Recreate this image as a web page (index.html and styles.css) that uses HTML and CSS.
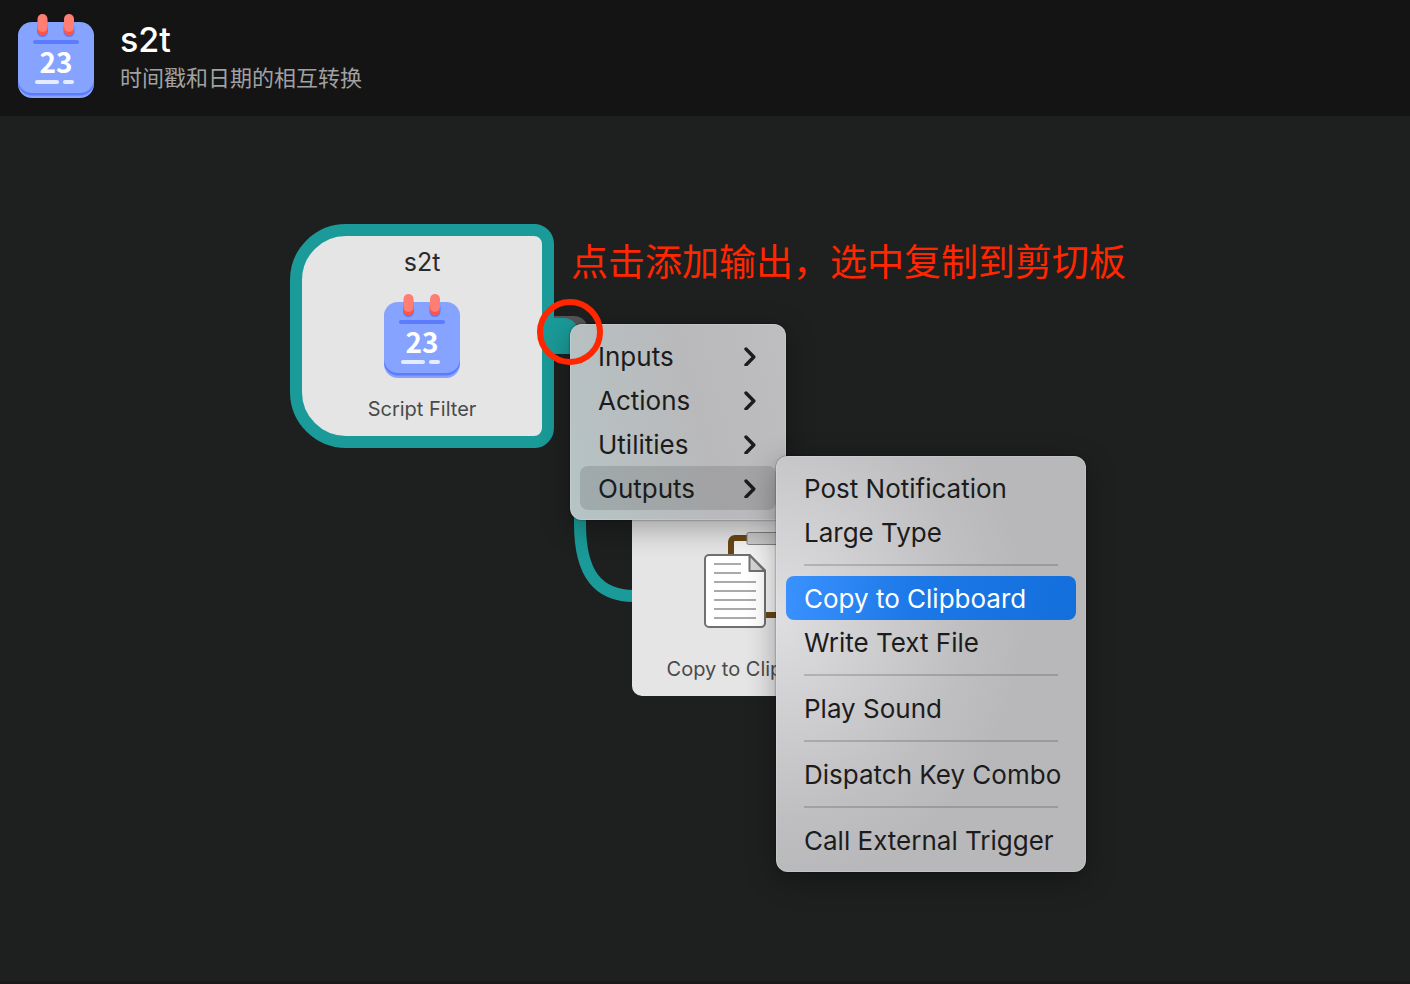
FILE: index.html
```html
<!DOCTYPE html>
<html lang="zh-CN">
<head>
<meta charset="utf-8">
<title>s2t</title>
<link rel="stylesheet" href="styles.css">
</head>
<body>
<svg class="defs" aria-hidden="true">
  <symbol id="calendar" viewBox="0 0 76 84">
    <rect x="0" y="10" width="76" height="74" rx="14" fill="#85a3ff"/>
    <path d="M0 65V68a14 13.500 0 0 0 14 13.500H62A14 13.500 0 0 0 76 68V65Z" fill="#5c7bff"/>
    <rect x="0" y="8" width="76" height="71" rx="14" fill="#85a3ff"/>
    <rect x="19" y="8" width="11" height="15" rx="5.500" fill="#5c7bff"/>
    <rect x="45.500" y="8" width="11" height="15" rx="5.500" fill="#5c7bff"/>
    <rect x="19.500" y="4" width="10" height="17.500" rx="5" fill="#ff5449"/>
    <rect x="46" y="4" width="10" height="17.500" rx="5" fill="#ff5449"/>
    <rect x="19.500" y="0" width="10" height="18" rx="5" fill="#ff7e73"/>
    <rect x="46" y="0" width="10" height="18" rx="5" fill="#ff7e73"/>
    <rect x="15" y="26" width="46" height="4" rx="2" fill="#5c7bff"/>
    <rect x="17" y="66" width="24" height="4" rx="2" fill="#e6ecff"/>
    <rect x="45" y="66" width="11" height="4" rx="2" fill="#e6ecff"/>
  </symbol>
  <symbol id="chevron" viewBox="0 0 12 20">
    <path d="M2 3 9.800 11 2 19" fill="none" stroke="#1c1c1c" stroke-width="3.400" stroke-linecap="round" stroke-linejoin="round"/>
  </symbol>
</svg>

<header class="header">
  <svg class="cal" viewBox="0 0 76 84"><use href="#calendar"/><text x="38" y="59" text-anchor="middle" class="cal-day">23</text></svg>
  <div class="heading">
    <h1 class="title">s2t</h1>
    <p class="subtitle">时间戳和日期的相互转换</p>
  </div>
</header>

<main class="canvas">
  <svg class="wire" viewBox="0 0 80 110" aria-hidden="true">
    <path d="M10 0V24C10 74 28 96 64 96H80" fill="none" stroke="#1a9a98" stroke-width="12"/>
  </svg>
  <div class="port-shadow"></div>
  <div class="port"></div>

  <section class="node node-filter">
    <h2 class="node-title">s2t</h2>
    <svg class="cal" viewBox="0 0 76 84"><use href="#calendar"/><text x="38" y="59" text-anchor="middle" class="cal-day">23</text></svg>
    <p class="node-kind">Script Filter</p>
  </section>

  <section class="node node-copy">
    <svg class="clip" viewBox="0 0 96 98" aria-hidden="true">
      <rect x="27" y="8" width="66" height="77" rx="4" fill="#f4f4f4" stroke="#694613" stroke-width="6"/>
      <rect x="43" y="2.500" width="34" height="12" rx="1.500" fill="#cdcdcd" stroke="#858585"/>
      <path d="M5 25H45.500L61 40.500V93a4 4 0 0 1-4 4H5a4 4 0 0 1-4-4V29a4 4 0 0 1 4-4Z" fill="#fff" stroke="#707070" stroke-width="2"/>
      <path d="M45.500 25V41H61Z" fill="#d5d5d5" stroke="#707070" stroke-width="2" stroke-linejoin="round"/>
      <path d="M10 34H37M10 43H37M10 52H52M10 61H52M10 70H52M10 79H52M10 88H52" stroke="#aaa" stroke-width="2"/>
    </svg>
    <p class="node-kind">Copy to Clipboard</p>
  </section>

  <nav class="menu menu-main" aria-label="Add object">
    <button class="item">Inputs<svg class="chev" aria-hidden="true"><use href="#chevron"/></svg></button>
    <button class="item">Actions<svg class="chev" aria-hidden="true"><use href="#chevron"/></svg></button>
    <button class="item">Utilities<svg class="chev" aria-hidden="true"><use href="#chevron"/></svg></button>
    <button class="item item-open" aria-expanded="true">Outputs<svg class="chev" aria-hidden="true"><use href="#chevron"/></svg></button>
  </nav>

  <nav class="menu menu-outputs" aria-label="Outputs">
    <button class="item">Post Notification</button>
    <button class="item">Large Type</button>
    <hr class="rule">
    <button class="item item-active">Copy to Clipboard</button>
    <button class="item">Write Text File</button>
    <hr class="rule">
    <button class="item">Play Sound</button>
    <hr class="rule">
    <button class="item">Dispatch Key Combo</button>
    <hr class="rule">
    <button class="item">Call External Trigger</button>
  </nav>

  <p class="note">点击添加输出，选中复制到剪切板</p>
  <div class="ring"></div>
</main>
</body>
</html>
```

FILE: styles.css
```css
* { box-sizing: border-box; }

body {
  margin: 0;
  min-height: 100vh;
  display: flex;
  flex-direction: column;
  background: #1e201f;
  font-family: Inter, "Noto Sans CJK SC", sans-serif;
}

h1, h2, p { margin: 0; font-weight: 400; }

.defs { position: absolute; width: 0; height: 0; }

.header {
  display: flex;
  align-items: flex-start;
  gap: 26px;
  min-height: 116px;
  padding: 14px 18px;
  background: #141414;
}

.cal { display: block; flex: none; width: 76px; height: 84px; }
.cal-day { font: 700 28px "Noto Sans CJK SC", sans-serif; fill: #fff; }

.heading { padding-top: 4px; }
.title { color: #fff; font-size: 34px; line-height: 44px; font-weight: 500; }
.subtitle { color: #a1a1a1; font-size: 22px; line-height: 32px; }

.canvas {
  position: relative;
  flex: 1;
  min-height: 780px;
  overflow: hidden;
  border-bottom: 3px solid #1c181a;
}

.node {
  position: absolute;
  display: flex;
  flex-direction: column;
  align-items: center;
  background: #e5e5e5;
}
.node-filter {
  left: 290px;
  top: 108px;
  width: 264px;
  height: 224px;
  padding-top: 10px;
  border: 12px solid #1a9a98;
  border-radius: 56px 20px 20px 56px;
}
.node-copy {
  left: 632px;
  top: 380px;
  width: 240px;
  height: 200px;
  padding-top: 34px;
  border-radius: 10px;
}
.node-title { color: #2b2b2b; font-size: 25px; line-height: 32px; margin-bottom: 16px; }
.node-kind { color: #4a4a4a; font-size: 20px; line-height: 26px; margin-top: 18px; }
.node-copy .node-kind { margin-top: 28px; }
.clip { width: 96px; height: 98px; }

.wire { position: absolute; left: 570px; top: 384px; width: 80px; height: 110px; }

.port, .port-shadow { position: absolute; border-radius: 0 14px 0 0; }
.port { left: 550px; top: 202px; width: 28px; height: 36px; background: #1a9a98; }
.port-shadow { left: 554px; top: 200px; width: 34px; height: 36px; background: #555; }

.menu {
  position: absolute;
  padding: 10px;
  border-radius: 12px;
  box-shadow: 0 0 2px rgba(0, 0, 0, .6), 0 8px 30px rgba(0, 0, 0, .32), inset 0 0 0 1px rgba(255, 255, 255, .16);
}
.menu-main {
  left: 570px;
  top: 208px;
  width: 216px;
  background: linear-gradient(75deg, #b5c4c5 0%, #b8bec0 30%, #b9b9bb 58%, #bebec0 100%);
}
.menu-outputs {
  left: 776px;
  top: 340px;
  width: 310px;
  background: radial-gradient(ellipse 250px 270px at 0 38%, #dfdee0 0%, #d0cfd1 35%, #bfbfc1 75%, #b8b8ba 100%);
}

.item {
  display: flex;
  align-items: center;
  justify-content: space-between;
  width: 100%;
  height: 44px;
  padding: 0 20px 0 18px;
  border: 0;
  border-radius: 8px;
  background: none;
  color: #1c1c1c;
  font: 400 26px Inter, sans-serif;
  text-align: left;
  white-space: nowrap;
}
.item-open { background: rgba(0, 0, 0, .12); }
.item-active { color: #fff; background: linear-gradient(100deg, #3b92ff, #1b78e6 45%, #126fdc); }
.chev { flex: none; width: 12px; height: 20px; overflow: visible; }

.rule { height: 2px; margin: 10px 18px; border: 0; background: rgba(0, 0, 0, .16); }

.note {
  position: absolute;
  left: 571px;
  top: 118px;
  color: #ff2600;
  font: 400 37px/52px "Noto Sans CJK SC", sans-serif;
  white-space: nowrap;
}

.ring {
  position: absolute;
  left: 537px;
  top: 183px;
  width: 66px;
  height: 66px;
  border: 6px solid #ff2600;
  border-radius: 50%;
}
```
